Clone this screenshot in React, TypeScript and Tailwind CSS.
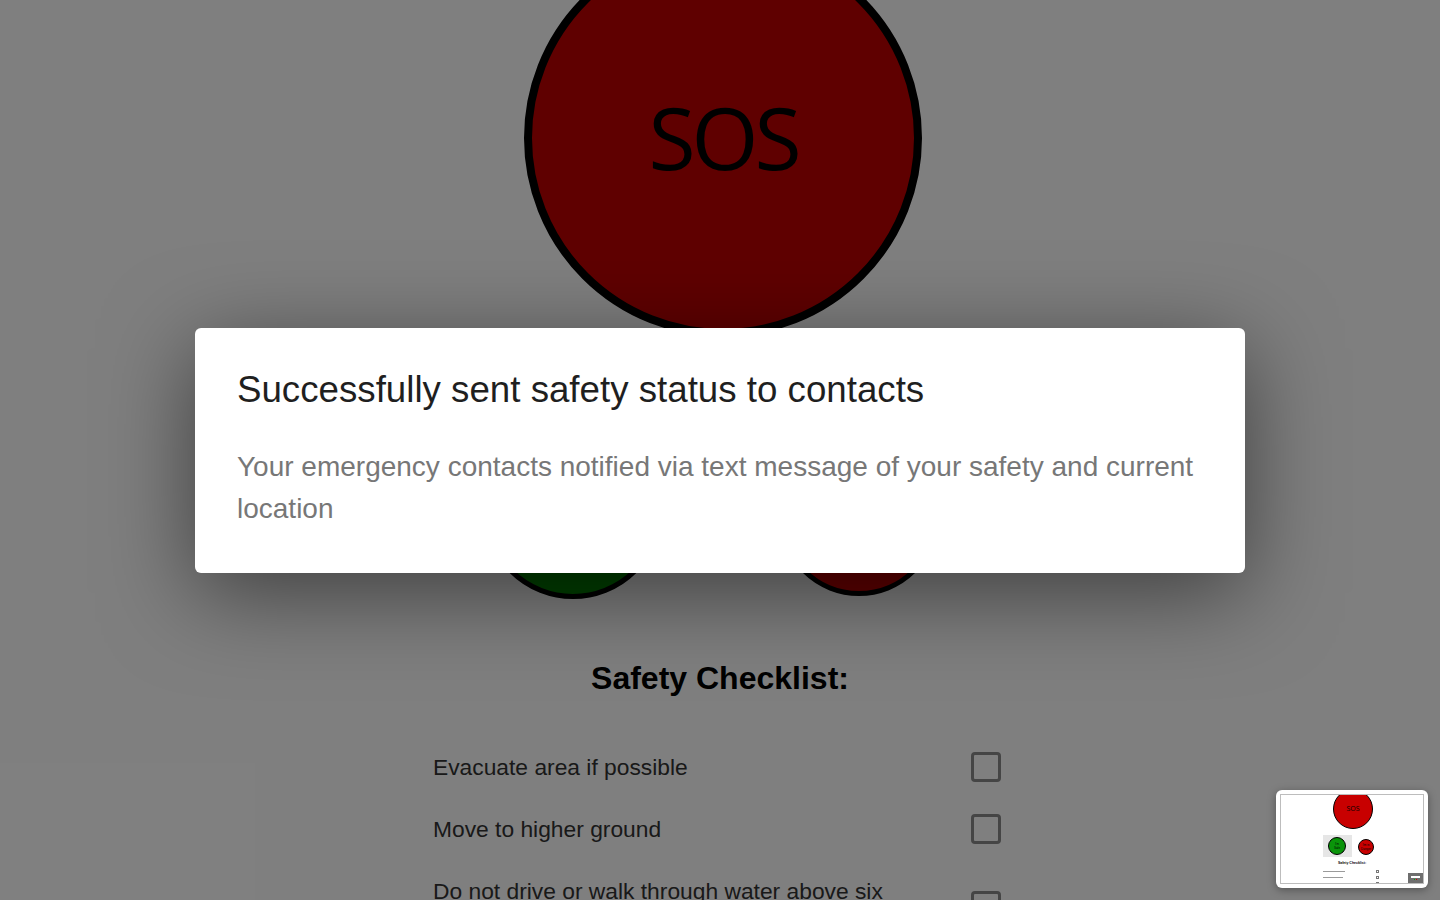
const CHECKLIST = [
  'Evacuate area if possible',
  'Move to higher ground',
  'Do not drive or walk through water above six inches',
  'Turn off utilities if instructed to do so',
];

function Checkbox() {
  return <div className="w-[30px] h-[30px] shrink-0 rounded-[4px] border-[3px] border-[#8a8a8a] bg-white" />;
}

function Thumbnail() {
  return (
    <div className="absolute left-[1276px] top-[790px] w-[152px] h-[98px] bg-white rounded-[6px] shadow-[0_2px_8px_rgba(0,0,0,0.35)] p-[4px]">
      <div className="relative w-full h-full overflow-hidden border border-[#bdbdbd] bg-white">
        <div className="absolute left-[52px] top-[-6px] w-[40px] h-[40px] rounded-full bg-[#c80000] border border-black flex items-center justify-center text-[7px] text-black" style={{ fontFamily: '"Open Sans", sans-serif' }}>
          SOS
        </div>
        <div className="absolute left-[42px] top-[40px] w-[29px] h-[22px] bg-[#e6e6e6]" />
        <div className="absolute left-[47px] top-[42px] w-[18px] h-[18px] rounded-full bg-[#0a940a] border border-black flex items-center justify-center text-[3px] leading-[4px] text-center">
          I'm<br />Safe
        </div>
        <div className="absolute left-[77px] top-[44px] w-[16px] h-[16px] rounded-full bg-[#c80000] border border-black flex items-center justify-center text-[3px] leading-[4px] text-center">
          I'm in<br />Danger
        </div>
        <div className="absolute left-0 right-0 top-[66px] text-center text-[3.5px] font-bold" style={{ fontFamily: '"Liberation Sans", sans-serif' }}>
          Safety Checklist:
        </div>
        {[75, 81, 87].map((t, i) => (
          <div key={t} className="absolute left-[42px] w-[56px] flex justify-between items-center" style={{ top: t }}>
            <div className="h-[1.5px] bg-[#9a9a9a]" style={{ width: [22, 20, 40][i] }} />
            <div className="w-[3px] h-[3px] border-[0.5px] border-[#777]" />
          </div>
        ))}
        <div className="absolute left-[127px] top-[78px] w-[15px] h-[10px] bg-[#6e6e6e] flex flex-col items-center justify-center gap-[1px]">
          <div className="w-[9px] h-[2px] bg-white" />
          <div className="flex gap-[1px]">
            <div className="w-[1px] h-[1px] bg-[#0a0]" />
            <div className="w-[1px] h-[1px] bg-[#c00]" />
          </div>
        </div>
      </div>
    </div>
  );
}

export default function App() {
  return (
    <div className="relative w-[1440px] h-[900px] overflow-hidden bg-white" style={{ fontFamily: '"Liberation Sans", Arial, sans-serif' }}>
      {/* page under the dialog */}
      <div className="flex flex-col items-center -mt-[61px]">
        <button className="w-[398px] h-[398px] ml-[6px] rounded-full bg-[#be0000] border-[8px] border-black flex items-center justify-center">
          <span className="text-[86px] text-black tracking-[-4px] -mt-[4px]" style={{ fontFamily: '"Open Sans", sans-serif' }}>SOS</span>
        </button>
        <div className="flex items-end gap-[116px] mt-[82px] ml-[-18px]">
          <div className="w-[180px] h-[180px] rounded-full bg-[#008000] border-[5px] border-black flex items-center justify-center text-[24px] text-center" style={{ fontFamily: '"Open Sans", sans-serif' }}>
            I'm<br />Safe
          </div>
          <div className="w-[160px] h-[160px] mb-[3px] rounded-full bg-[#c00000] border-[5px] border-black flex items-center justify-center text-[22px] text-center" style={{ fontFamily: '"Open Sans", sans-serif' }}>
            I'm in<br />Danger
          </div>
        </div>
        <h2 className="mt-[61px] text-[32px] font-bold text-black leading-[36px]">Safety Checklist:</h2>
        <div className="mt-[56px] w-[574px] flex flex-col gap-[32px]">
          {CHECKLIST.map(item => (
            <div key={item} className="flex items-center justify-between pr-[6px]">
              <span className="w-[480px] text-[22.8px] leading-[30px] text-[#333]">{item}</span>
              <Checkbox />
            </div>
          ))}
        </div>
      </div>

      {/* dialog */}
      <div className="absolute inset-0 bg-black/50 flex items-center justify-center">
        <div className="w-[1050px] h-[245px] bg-white rounded-[6px] shadow-[0_20px_90px_rgba(0,0,0,0.5)] px-[42px] pt-[40px]">
          <h1 className="text-[36.7px] leading-[44px] text-[#1f1f1f]">Successfully sent safety status to contacts</h1>
          <p className="mt-[34px] text-[28px] leading-[42px] text-[#777]">
            Your emergency contacts notified via text message of your safety and current location
          </p>
        </div>
      </div>

      <Thumbnail />
    </div>
  );
}
